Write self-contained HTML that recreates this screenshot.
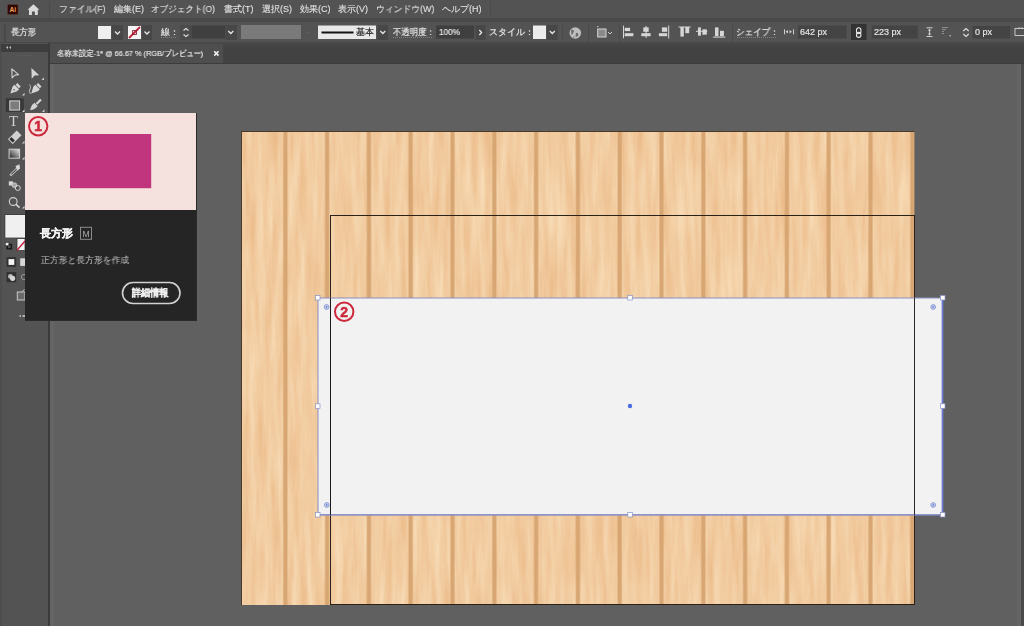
<!DOCTYPE html>
<html><head><meta charset="utf-8">
<style>
*{margin:0;padding:0;box-sizing:border-box}
html,body{width:1024px;height:626px;overflow:hidden;background:#606060;font-family:"Liberation Sans",sans-serif;color:#e0e0e0}
.a{position:absolute}
.t{position:absolute;white-space:nowrap;line-height:1;transform-origin:0 50%;will-change:transform}
.m{font-size:9px;color:#e2e2e2;top:4.5px;-webkit-text-stroke:0.1px #e2e2e2}
.c{font-size:9px;color:#e4e4e4;top:28px;-webkit-text-stroke:0.2px currentColor}
svg{position:absolute;left:0;top:0}
</style></head><body>
<!-- menu bar -->
<div class="a" style="left:0;top:0;width:1024px;height:18px;background:#535353"></div>
<div class="a" style="left:0;top:18px;width:1024px;height:4px;background:#494949"></div>
<!-- control bar -->
<div class="a" style="left:0;top:22px;width:1024px;height:20px;background:#535353"></div>
<div class="a" style="left:0;top:42px;width:1024px;height:2px;background:#494949"></div>
<!-- tab row -->
<div class="a" style="left:0;top:44px;width:1024px;height:19px;background:#424242"></div>
<div class="a" style="left:223px;top:44px;width:801px;height:3px;background:#454545"></div>
<div class="a" style="left:49px;top:44px;width:174px;height:19px;background:#4e4e4e"></div>
<div class="a" style="left:0;top:63px;width:1024px;height:1px;background:#3c3c3c"></div>
<!-- tools panel -->
<div class="a" style="left:0;top:43px;width:48px;height:583px;background:#535353"></div>
<div class="a" style="left:0;top:43px;width:2px;height:583px;background:#4d4d4d"></div>
<div class="a" style="left:50px;top:64px;width:4px;height:562px;background:#646464"></div>
<div class="a" style="left:48px;top:43px;width:2px;height:583px;background:#3b3b3b"></div>
<div class="a" style="left:1px;top:44px;width:47px;height:8px;background:#3d3d3d"></div>
<div class="a" style="left:1017px;top:64px;width:4px;height:562px;background:#646464"></div>
<div class="a" style="left:1021px;top:64px;width:3px;height:562px;background:#4b4b4b"></div>

<svg width="1024" height="626" viewBox="0 0 1024 626">
<!-- menu bar icons -->
<rect x="7.5" y="4.5" width="10.5" height="10" rx="1.2" fill="#2d0900" stroke="#5a3a30" stroke-width="0.6"/>
<text x="9.6" y="12.3" font-family="Liberation Sans" font-weight="bold" font-size="6.5" fill="#f8a260">Ai</text>
<path d="M33.4 4.3 L39.4 9.8 L37.8 9.8 L37.8 15 L34.9 15 L34.9 11.6 L31.9 11.6 L31.9 15 L29 15 L29 9.8 L27.6 9.8 Z" fill="#dadada"/>
<rect x="49" y="2" width="1" height="16" fill="#4a4a4a"/>
<rect x="490" y="2" width="1" height="16" fill="#4a4a4a"/>
<!-- control bar grip -->
<path d="M4.8 24 V41.5" stroke="#464646" stroke-width="2" stroke-dasharray="1.5 0.5"/>
<!-- fill swatch -->
<rect x="98" y="26" width="13" height="13" fill="#efefef"/>
<rect x="112" y="25" width="11" height="15" fill="#474747"/>
<path d="M115 31.5 L117.5 34 L120 31.5" fill="none" stroke="#e6e6e6" stroke-width="1.3"/>
<!-- stroke swatch -->
<rect x="128" y="26" width="13" height="13" fill="#f4f4f4"/>
<path d="M129 38 L140 27" stroke="#c0203a" stroke-width="1.8"/>
<rect x="132.6" y="30.6" width="3.8" height="3.8" fill="none" stroke="#8a2030" stroke-width="0.9"/>
<rect x="142" y="25" width="10" height="15" fill="#474747"/>
<path d="M144.5 31.5 L147 34 L149.5 31.5" fill="none" stroke="#e6e6e6" stroke-width="1.3"/>
<!-- stroke weight -->
<path d="M161 37.5 H176" stroke="#8a8a8a" stroke-width="0.8" stroke-dasharray="1 1"/>
<rect x="180" y="25" width="11" height="15" fill="#4b4b4b"/>
<path d="M183.5 30.5 L186 28.5 L188.5 30.5 M183.5 34.5 L186 36.5 L188.5 34.5" fill="none" stroke="#e0e0e0" stroke-width="1.1"/>
<rect x="191.5" y="25.5" width="33.5" height="13" fill="#3f3f3f"/>
<rect x="225.5" y="25" width="11.5" height="15" fill="#474747"/>
<path d="M228.3 31 L230.8 33.5 L233.3 31" fill="none" stroke="#e6e6e6" stroke-width="1.3"/>
<!-- variable width profile (disabled) -->
<rect x="241" y="25" width="60" height="14" fill="#7a7a7a"/>
<path d="M306.5 31.8 L308 33.2 L309.5 31.8" fill="none" stroke="#6a6a6a" stroke-width="0.8"/>
<!-- brush -->
<rect x="318" y="25.5" width="58" height="13.5" fill="#e8e8e8"/>
<rect x="321.5" y="31.5" width="32" height="2" fill="#111"/>
<rect x="377.5" y="25" width="10.5" height="15" fill="#474747"/>
<path d="M380.3 31 L382.8 33.5 L385.3 31" fill="none" stroke="#e6e6e6" stroke-width="1.3"/>
<!-- opacity -->
<path d="M393 37.5 H432" stroke="#8a8a8a" stroke-width="0.8" stroke-dasharray="1 1"/>
<rect x="436" y="25.5" width="38" height="13" fill="#3f3f3f"/>
<rect x="475.5" y="25" width="10" height="15" fill="#474747"/>
<path d="M479.3 30 L481.6 32.5 L479.3 35" fill="none" stroke="#e6e6e6" stroke-width="1.3"/>
<!-- style -->
<rect x="533" y="25.5" width="13" height="13.5" fill="#ececec"/>
<rect x="547" y="25" width="10.5" height="15" fill="#474747"/>
<path d="M549.8 31 L552.3 33.5 L554.8 31" fill="none" stroke="#e6e6e6" stroke-width="1.3"/>
<rect x="562" y="23" width="1" height="19" fill="#4a4a4a"/>
<!-- globe -->
<circle cx="575.3" cy="33" r="5.8" fill="#bdbdbd"/>
<path d="M571 30 Q573 29 574 31 Q573 34 571.5 35 Z M576 33 Q578 32 578.5 35 Q577 37 575.5 37 Z M573.5 36 l1 1.5 l-1 .5z" fill="#6a6a6a"/>
<rect x="588" y="23" width="1" height="19" fill="#4a4a4a"/>
<!-- transform -->
<rect x="597.7" y="29" width="8.3" height="8" fill="#8a8a8a" stroke="#d4d4d4" stroke-width="1"/>
<rect x="597.2" y="26" width="1.2" height="1.2" fill="#d0d0d0"/>
<path d="M608 32 L610 34 L612 32" fill="none" stroke="#cfcfcf" stroke-width="1"/>
<rect x="619" y="23" width="1" height="19" fill="#4a4a4a"/>
<!-- align icons -->
<g fill="#d6d6d6">
<rect x="623" y="25.7" width="1" height="12.5"/>
<rect x="624.7" y="27.8" width="5.4" height="3.3"/>
<rect x="624.7" y="33.2" width="8.7" height="3"/>
<rect x="645.6" y="26" width="1" height="12"/>
<rect x="643.3" y="27.4" width="5.4" height="4.4"/>
<rect x="641.3" y="33.2" width="9.3" height="3"/>
<rect x="668.2" y="25.5" width="1" height="13"/>
<rect x="661.9" y="27.4" width="5.3" height="4.4"/>
<rect x="658.9" y="33.2" width="8.3" height="3"/>
<rect x="678.5" y="26.5" width="12.2" height="1"/>
<rect x="680.4" y="27" width="3.4" height="9.6"/>
<rect x="685.3" y="27" width="3.9" height="6.2"/>
<rect x="696" y="30.8" width="11.3" height="1"/>
<rect x="698" y="27.4" width="2.9" height="8.3"/>
<rect x="702.4" y="29.3" width="4.4" height="5.4"/>
<rect x="713.1" y="36.6" width="12.2" height="1"/>
<rect x="715" y="27.4" width="3.5" height="8.8"/>
<rect x="720" y="30.8" width="3.9" height="5.4"/>
</g>
<rect x="732" y="23" width="1" height="19" fill="#4a4a4a"/>
<!-- shape -->
<path d="M737 37.5 H776" stroke="#8a8a8a" stroke-width="0.8" stroke-dasharray="1 1"/>
<g fill="#cfcfcf">
<rect x="784" y="29.3" width="1" height="5"/>
<rect x="793" y="29.3" width="1" height="5"/>
<path d="M785.5 31.8 L788 30 V33.6Z M792 31.8 L789.5 30 V33.6Z"/>
</g>
<rect x="798" y="25.5" width="48.5" height="13" fill="#444444"/>
<rect x="851" y="24" width="15.5" height="16" fill="#333333"/>
<path d="M858.7 27.8 a2.2 2.2 0 0 1 2.2 2.2 v1.6 a2.2 2.2 0 0 1 -4.4 0 v-1.6 a2.2 2.2 0 0 1 2.2 -2.2z M858.7 32.4 a2.2 2.2 0 0 1 2.2 2.2 v.6 a2.2 2.2 0 0 1 -4.4 0 v-.6 a2.2 2.2 0 0 1 2.2 -2.2z" fill="none" stroke="#e6e6e6" stroke-width="1.1"/>
<rect x="871.7" y="25.5" width="46" height="13" fill="#444444"/>
<g fill="#d0d0d0">
<rect x="926.5" y="27.3" width="6" height="1"/>
<rect x="926.5" y="36" width="6" height="1"/>
<path d="M929.5 28.5 L931.2 30.8 H927.8Z M929.5 35.8 L931.2 33.5 H927.8Z"/>
<rect x="929" y="30.5" width="1" height="3.2"/>
</g>
<g fill="#c8c8c8">
<rect x="942.5" y="27" width="1" height="1"/><rect x="944.5" y="27" width="1" height="1"/><rect x="946.5" y="27" width="1" height="1"/>
<rect x="942.5" y="29" width="1" height="1"/><rect x="944.5" y="29" width="1" height="1"/>
<rect x="942.5" y="31" width="1" height="1"/><rect x="942.5" y="33" width="1" height="1"/>
<rect x="949.5" y="35" width="1.3" height="1.3"/>
</g>
<path d="M963.3 31 L966 28.5 L968.7 31 M963.3 34 L966 36.5 L968.7 34" fill="none" stroke="#e0e0e0" stroke-width="1.1"/>
<rect x="972.5" y="26" width="37.5" height="12.5" fill="#444444"/>
<path d="M1015 28.5 H1024 M1015 28 V35.5 H1024 M1019 28 v-1 M1022 28 v-1" fill="none" stroke="#c8c8c8" stroke-width="1"/>
<!-- tab close -->
<path d="M214.2 51.3 L218.5 55.6 M218.5 51.3 L214.2 55.6" stroke="#f2f2f2" stroke-width="1.6"/>
</svg>

<!-- menu text -->
<span class="t m" style="left:59px;transform:scaleX(0.98)">ファイル(F)</span>
<span class="t m" style="left:114px">編集(E)</span>
<span class="t m" style="left:151px;transform:scaleX(0.955)">オブジェクト(O)</span>
<span class="t m" style="left:224px">書式(T)</span>
<span class="t m" style="left:262px">選択(S)</span>
<span class="t m" style="left:300px">効果(C)</span>
<span class="t m" style="left:338px">表示(V)</span>
<span class="t m" style="left:376px;transform:scaleX(0.98)">ウィンドウ(W)</span>
<span class="t m" style="left:442px">ヘルプ(H)</span>

<!-- control bar text -->
<span class="t c" style="left:11px;font-size:8.5px;transform:scaleX(0.93)">長方形</span>
<span class="t c" style="left:161px">線：</span>
<span class="t c" style="left:356px;color:#1e1e1e">基本</span>
<span class="t c" style="left:393px;transform:scaleX(0.93)">不透明度：</span>
<span class="t c" style="left:439px;transform:scaleX(0.91)">100%</span>
<span class="t c" style="left:489px">スタイル：</span>
<span class="t c" style="left:736px;transform:scaleX(0.95)">シェイプ：</span>
<span class="t c" style="left:800px">642 px</span>
<span class="t c" style="left:874px">223 px</span>
<span class="t c" style="left:975px">0 px</span>

<!-- tab text -->
<span class="t" style="left:57px;top:49.5px;font-size:8px;color:#ececec;-webkit-text-stroke:0.15px #ececec;transform:scaleX(0.918)">名称未設定-1* @ 66.67 % (RGB/プレビュー)</span>

<svg width="1024" height="626" viewBox="0 0 1024 626">
<defs>
<filter id="wood" x="242" y="132" width="672" height="473" filterUnits="userSpaceOnUse" color-interpolation-filters="sRGB">
<feTurbulence type="fractalNoise" baseFrequency="0.14 0.012" numOctaves="4" seed="7" result="n"/>
<feColorMatrix in="n" type="matrix" values="0.06 0 0 0 0.918  0.16 0 0 0 0.720  0.22 0 0 0 0.520  0 0 0 0 1"/>
</filter>
<linearGradient id="groove" x1="0" x2="1" y1="0" y2="0">
<stop offset="0" stop-color="#d6a470" stop-opacity="0"/>
<stop offset="0.3" stop-color="#d6a470" stop-opacity="0.95"/>
<stop offset="0.7" stop-color="#d6a470" stop-opacity="0.95"/>
<stop offset="1" stop-color="#d6a470" stop-opacity="0"/>
</linearGradient>
<linearGradient id="grad" x1="0" y1="1" x2="1" y2="0">
<stop offset="0" stop-color="#1e1e1e"/><stop offset="1" stop-color="#e8e8e8"/>
</linearGradient>
</defs>
<!-- tools panel header -->
<path d="M6 47.5 L8 46 V49Z M9 47.5 L11 46 V49Z" fill="#bdbdbd"/>
<path d="M18 55.5 H31" stroke="#5e5e5e" stroke-width="1" stroke-dasharray="1 1"/>
<!-- selection -->
<path d="M11.8 68.8 L18.6 74.6 L14.9 75.1 L12.1 77.8 Z" fill="none" stroke="#d0d0d0" stroke-width="1.1" stroke-linejoin="round"/>
<path d="M31.4 68 L39.3 75.3 L34.6 75.6 L31.7 78.8 Z" fill="#d4d4d4"/>
<path d="M41.5 80 L44 77.3 V80Z" fill="#cfcfcf"/>
<!-- pen -->
<g transform="translate(15.2 88.6) rotate(45)" fill="#d6d6d6">
<path d="M0 6.8 L-3.2 0.6 L-3.2 -2.2 L3.2 -2.2 L3.2 0.6 Z"/><rect x="-2.4" y="-5.4" width="4.8" height="2.4"/>
<circle cx="0" cy="1.6" r="0.8" fill="#535353"/>
</g>
<path d="M22 95.5 L24.5 92.8 V95.5Z" fill="#cfcfcf"/>
<!-- curvature pen -->
<g transform="translate(36 88.6) rotate(45)" fill="#d6d6d6">
<path d="M0 6.8 L-3.2 0.6 L-3.2 -2.2 L3.2 -2.2 L3.2 0.6 Z"/><rect x="-2.4" y="-5.4" width="4.8" height="2.4"/>
</g>
<path d="M29.5 84.5 Q31.5 86.5 30 89 Q28.5 92 30.5 94" fill="none" stroke="#bdbdbd" stroke-width="1"/>
<!-- rect tool -->
<rect x="5.8" y="98.3" width="18" height="13.7" fill="#383838"/>
<rect x="9.8" y="100.9" width="9.8" height="9.2" fill="#7c7c7c" stroke="#d2d2d2" stroke-width="1"/>
<path d="M22 112 L24.5 109.3 V112Z" fill="#cfcfcf"/>
<!-- paintbrush -->
<g transform="translate(35.2 105.3) rotate(45)" fill="#d4d4d4">
<rect x="-1.1" y="-8.2" width="2.2" height="6.4"/>
<path d="M-2.3 -1.2 H2.3 Q2.8 3.5 0 7 Q-2.8 3.5 -2.3 -1.2Z"/>
</g>
<path d="M42 112 L44.5 109.3 V112Z" fill="#cfcfcf"/>
<!-- type -->
<text x="9.2" y="126.3" font-family="Liberation Serif" font-size="14" fill="#d4d4d4">T</text>
<!-- eraser -->
<g transform="translate(14.7 137.2) rotate(45)">
<rect x="-3.4" y="-6.2" width="6.8" height="12.4" fill="#d0d0d0"/>
<rect x="-2.4" y="2.2" width="4.8" height="3" fill="#303030"/>
</g>
<path d="M22 143.5 L24.5 140.8 V143.5Z" fill="#cfcfcf"/>
<!-- gradient -->
<rect x="9.1" y="149.2" width="10.5" height="9" fill="url(#grad)" stroke="#d0d0d0" stroke-width="1"/>
<path d="M22 159.5 L24.5 156.8 V159.5Z" fill="#cfcfcf"/>
<!-- eyedropper -->
<path d="M10 174.5 L16.5 168 M11.6 175.6 L18 169.2" stroke="#cfcfcf" stroke-width="1"/>
<path d="M10 174.5 L11.6 175.6" stroke="#cfcfcf" stroke-width="1.4"/>
<path d="M15.5 166 L19.5 164.2 L20 168.5 L17.2 170.8 Z" fill="#d6d6d6"/>
<!-- shape builder -->
<rect x="8.8" y="181.3" width="4.2" height="4.2" fill="#d4d4d4"/>
<circle cx="14.4" cy="185.2" r="2.4" fill="#a8a8a8" stroke="#d0d0d0" stroke-width="0.8"/>
<circle cx="17.8" cy="188" r="2.5" fill="none" stroke="#d4d4d4" stroke-width="1"/>
<!-- zoom -->
<circle cx="13.2" cy="201.5" r="3.9" fill="none" stroke="#d2d2d2" stroke-width="1.1"/>
<path d="M16 204.3 L19.6 207.6" stroke="#d2d2d2" stroke-width="1.6"/>
<path d="M22 208.5 L24.5 205.8 V208.5Z" fill="#cfcfcf"/>
<!-- fill / stroke -->
<rect x="17" y="238.5" width="8" height="12" fill="#f4f4f4" stroke="#3a3a3a" stroke-width="0.8"/>
<path d="M16.8 250.5 L25 241" stroke="#c0203a" stroke-width="1.4"/>
<rect x="4.5" y="214.2" width="20.5" height="24" fill="#3c3c3c"/>
<rect x="5.3" y="215" width="19.7" height="22.6" fill="#f0f0f0"/>
<rect x="5.2" y="242.3" width="3.8" height="3.5" fill="#f0f0f0" stroke="#222" stroke-width="0.6"/>
<path d="M8.6 244.5 H11.4 V248.8 H7.2 V246" fill="none" stroke="#1a1a1a" stroke-width="1.6"/>
<!-- color modes -->
<rect x="6.6" y="257.2" width="9.6" height="9.6" fill="#303030"/>
<rect x="8.5" y="259.1" width="5.8" height="5.8" fill="#f4f4f4"/>
<rect x="20.2" y="258.3" width="5" height="7.6" fill="#d8d8d8"/>
<!-- drawing modes -->
<rect x="6.6" y="272.2" width="9.6" height="10" fill="#303030"/>
<circle cx="10.4" cy="276.4" r="2.4" fill="#bdbdbd"/>
<circle cx="12.6" cy="278.3" r="2.6" fill="#d6d6d6"/>
<circle cx="24" cy="277" r="2.6" fill="none" stroke="#9a9a9a" stroke-width="1"/>
<!-- screen mode -->
<rect x="17.3" y="292" width="7.7" height="8" fill="#6a6a6a" stroke="#c8c8c8" stroke-width="1"/>
<path d="M21.5 292 L24.5 289.5" stroke="#c8c8c8" stroke-width="1"/>
<path d="M19.5 316 H21 M22.5 316 H25" stroke="#cfcfcf" stroke-width="1.4"/>

<!-- artboard wood -->
<rect x="241" y="131" width="673" height="474" fill="#4a3a2a"/>
<rect x="242" y="132" width="672" height="473" fill="#f0c596" filter="url(#wood)"/>
<g fill="url(#groove)">
<rect x="282.3" y="132" width="6" height="473"/><rect x="324.1" y="132" width="6" height="473"/><rect x="365.9" y="132" width="6" height="473"/>
<rect x="407.7" y="132" width="6" height="473"/><rect x="449.5" y="132" width="6" height="473"/><rect x="491.3" y="132" width="6" height="473"/>
<rect x="533.1" y="132" width="6" height="473"/><rect x="574.9" y="132" width="6" height="473"/><rect x="616.7" y="132" width="6" height="473"/>
<rect x="658.5" y="132" width="6" height="473"/><rect x="700.3" y="132" width="6" height="473"/><rect x="742.1" y="132" width="6" height="473"/>
<rect x="783.9" y="132" width="6" height="473"/><rect x="825.7" y="132" width="6" height="473"/><rect x="867.5" y="132" width="6" height="473"/>
<rect x="909.3" y="132" width="6" height="473"/>
</g>
<!-- black artboard rect -->
<rect x="330.5" y="215.5" width="584" height="389" fill="none" stroke="#2a2218" stroke-width="1"/>
<!-- selected rectangle -->
<rect x="318" y="298" width="624.5" height="217" fill="#f2f2f2"/>
<rect x="318" y="298" width="624.5" height="217" fill="none" stroke="#8a90c0" stroke-width="1"/>
<rect x="941.6" y="298" width="1.8" height="217" fill="#6a7ad0"/>
<rect x="318" y="514.3" width="625" height="1" fill="#7c84c8"/>
<rect x="330" y="298" width="1" height="217" fill="#1a1a1a"/>
<rect x="914" y="298" width="1" height="217" fill="#2a2a2a"/>
<g fill="#ffffff" stroke="#8893c4" stroke-width="0.7">
<rect x="315.5" y="295.5" width="4.5" height="4.5"/><rect x="627.8" y="295.5" width="4.5" height="4.5"/><rect x="940.5" y="295.5" width="4.5" height="4.5"/>
<rect x="315.5" y="403.8" width="4.5" height="4.5"/><rect x="940.5" y="403.8" width="4.5" height="4.5"/>
<rect x="315.5" y="512.5" width="4.5" height="4.5"/><rect x="627.8" y="512.5" width="4.5" height="4.5"/><rect x="940.5" y="512.5" width="4.5" height="4.5"/>
</g>
<circle cx="630" cy="406" r="2.2" fill="#4c6ae0"/>
<g fill="#c4cdee" stroke="#7d90d0" stroke-width="0.8">
<circle cx="326.6" cy="307" r="2.4"/><circle cx="933.2" cy="307" r="2.4"/><circle cx="326.8" cy="505" r="2.4"/><circle cx="933.2" cy="505" r="2.4"/>
</g>
<g fill="#5068c8">
<circle cx="326.6" cy="307" r="0.8"/><circle cx="933.2" cy="307" r="0.8"/><circle cx="326.8" cy="505" r="0.8"/><circle cx="933.2" cy="505" r="0.8"/>
</g>
<!-- marker 2 -->
<circle cx="344.2" cy="311.8" r="9.2" fill="none" stroke="#cc2a3c" stroke-width="2"/>
<text x="344.2" y="316.9" text-anchor="middle" font-family="Liberation Sans" font-weight="bold" font-size="14" fill="#cc2a3c" stroke="#cc2a3c" stroke-width="0.5">2</text>

<!-- tooltip -->
<rect x="25" y="113" width="172" height="208" fill="#2a2a2a"/>
<rect x="25" y="113" width="171" height="97" fill="#f5e1dd"/>
<rect x="25" y="210" width="171" height="110" fill="#252525"/>
<rect x="70" y="134" width="81.2" height="54.2" fill="#c1357f"/>
<circle cx="38.2" cy="126.2" r="9.2" fill="none" stroke="#cc2a3c" stroke-width="2"/>
<text x="38.2" y="131.3" text-anchor="middle" font-family="Liberation Sans" font-weight="bold" font-size="14" fill="#cc2a3c" stroke="#cc2a3c" stroke-width="0.6">1</text>
<rect x="80.5" y="227.3" width="11" height="12" fill="none" stroke="#8a8a8a" stroke-width="1"/>
<text x="86" y="236.6" text-anchor="middle" font-family="Liberation Sans" font-size="8.5" fill="#b0b0b0">M</text>
<rect x="122.5" y="282.5" width="57.5" height="21" rx="10.5" fill="none" stroke="#d2d2d2" stroke-width="1.6"/>
</svg>

<span class="t" style="left:40px;top:228px;font-size:11px;font-weight:bold;color:#f4f4f4;-webkit-text-stroke:0.3px #f4f4f4">長方形</span>
<span class="t" style="left:41px;top:256px;font-size:9px;color:#c2c2c2;transform:scaleX(0.98)">正方形と長方形を作成</span>
<span class="t" style="left:132px;top:288px;font-size:10px;font-weight:bold;color:#f0f0f0;transform:scaleX(0.91);-webkit-text-stroke:0.3px #f0f0f0">詳細情報</span>
</body></html>
